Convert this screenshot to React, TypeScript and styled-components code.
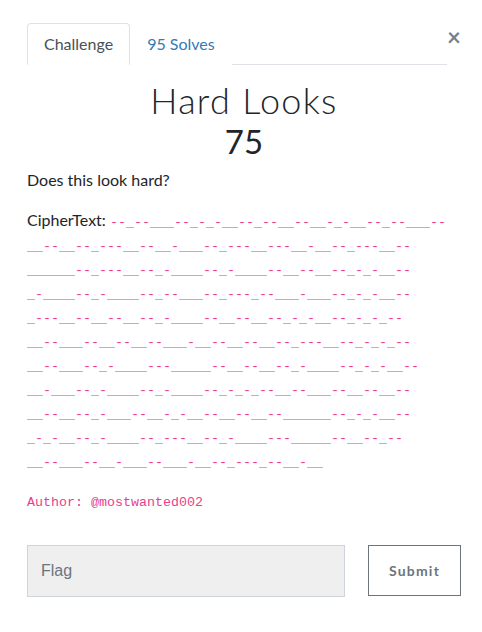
import styled, { createGlobalStyle } from "styled-components";

const GlobalStyle = createGlobalStyle`
    body {
        margin: 0;
        background: #fff;
        font-family: Lato, "Noto Sans", sans-serif;
        color: #212529;
    }
`;

const Modal = styled.div`
    box-sizing: border-box;
    width: 482px;
    padding: 23px 21px 30px 27px;
`;

const Header = styled.div`
    display: flex;
    align-items: flex-start;
`;

const Tabs = styled.ul`
    display: flex;
    width: 420px;
    margin: 0;
    padding: 0;
    list-style: none;
    border-bottom: 1px solid #dee2e6;
`;

const Tab = styled.li<{ $active?: boolean }>`
    margin-bottom: -1px;
    padding: 8px 16px;
    font-size: 16px;
    line-height: 24px;
    border: 1px solid ${(p) => (p.$active ? "#dee2e6" : "transparent")};
    border-bottom-color: ${(p) => (p.$active ? "#fff" : "transparent")};
    border-radius: 4px 4px 0 0;
    background: #fff;
    color: ${(p) => (p.$active ? "#495057" : "#337ab7")};
    cursor: pointer;
`;

const CloseButton = styled.button`
    margin-left: auto;
    margin-top: 2px;
    padding: 0;
    border: 0;
    background: transparent;
    font-family: Lato, sans-serif;
    font-size: 24px;
    font-weight: 700;
    line-height: 1;
    color: #000;
    opacity: 0.5;
`;

const Title = styled.h2`
    margin: 14px 0 0;
    text-align: center;
    font-size: 36px;
    font-weight: 300;
    letter-spacing: 1.3px;
    line-height: 1.2;
`;

const Value = styled.h3`
    margin: 0 0 6px;
    text-align: center;
    font-size: 33px;
    font-weight: 400;
    line-height: 1.2;
`;

const Text = styled.p`
    margin: 0 0 16px;
    font-size: 16px;
    line-height: 24px;
`;

const Code = styled.code`
    font-family: "Liberation Mono", "DejaVu Sans Mono", monospace;
    font-size: 13.33px;
    line-height: 1;
    color: #e83e8c;
    white-space: pre;
`;

const FlagForm = styled.form`
    display: flex;
    justify-content: space-between;
    margin-top: 33px;
    width: 434px;
`;

const FlagInput = styled.input`
    box-sizing: border-box;
    width: 318px;
    height: 52px;
    padding: 0 13px;
    border: 1px solid #ced4da;
    background: #efefef;
    font-family: "Liberation Sans", Arial, sans-serif;
    font-size: 16px;
    color: #495057;
    outline: none;

    &::placeholder {
        color: #6c757d;
    }
`;

const SubmitButton = styled.button`
    box-sizing: border-box;
    width: 93px;
    height: 51px;
    border: 1px solid #6c757d;
    background: #fff;
    font-family: Lato, sans-serif;
    font-size: 14px;
    font-weight: 700;
    letter-spacing: 1.2px;
    color: #6c757d;
`;

const cipher = [
    "--_--___--_-_-__--_--__--__-_-__--_--___--",
    "__--__--_---__--__-___--_---__---__-__--_---__--",
    "______--_---__--_-____--_-____--__--__--_-_-__--",
    "_-____--_-____--_--___--_---_--___-___--_-_-__--",
    "_---__--__--__--_-____--__--__--_-_-__--_-_-_--",
    "__--___--__--__--___-__--__--__--_---__--_-_-_--",
    "__--___--_-____---_____--__--__--_-____--_-_-__--",
    "__-___--_-____--_-____--_-_-_--__--___--__--__--",
    "__--__--_-___--__-_-__--__--__--______--_-_-__--",
    "_-_-__--_-____--_---__--_-____---_____--__--_--",
    "__--___--__-___--___-__--_---_--__-__",
];

export default function App() {
    return (
        <>
            <GlobalStyle />
            <Modal>
                <Header>
                    <Tabs>
                        <Tab $active>Challenge</Tab>
                        <Tab>95 Solves</Tab>
                    </Tabs>
                    <CloseButton type="button">×</CloseButton>
                </Header>
                <Title>Hard Looks</Title>
                <Value>75</Value>
                <Text>Does this look hard?</Text>
                <Text>
                    CipherText:{" "}
                    <Code>
                        {cipher.map((line, i) => (
                            <span key={i}>
                                {i > 0 && <br />}
                                {line}
                            </span>
                        ))}
                    </Code>
                </Text>
                <Text>
                    <Code>Author: @mostwanted002</Code>
                </Text>
                <FlagForm onSubmit={(e) => e.preventDefault()}>
                    <FlagInput placeholder="Flag" />
                    <SubmitButton type="submit">Submit</SubmitButton>
                </FlagForm>
            </Modal>
        </>
    );
}
